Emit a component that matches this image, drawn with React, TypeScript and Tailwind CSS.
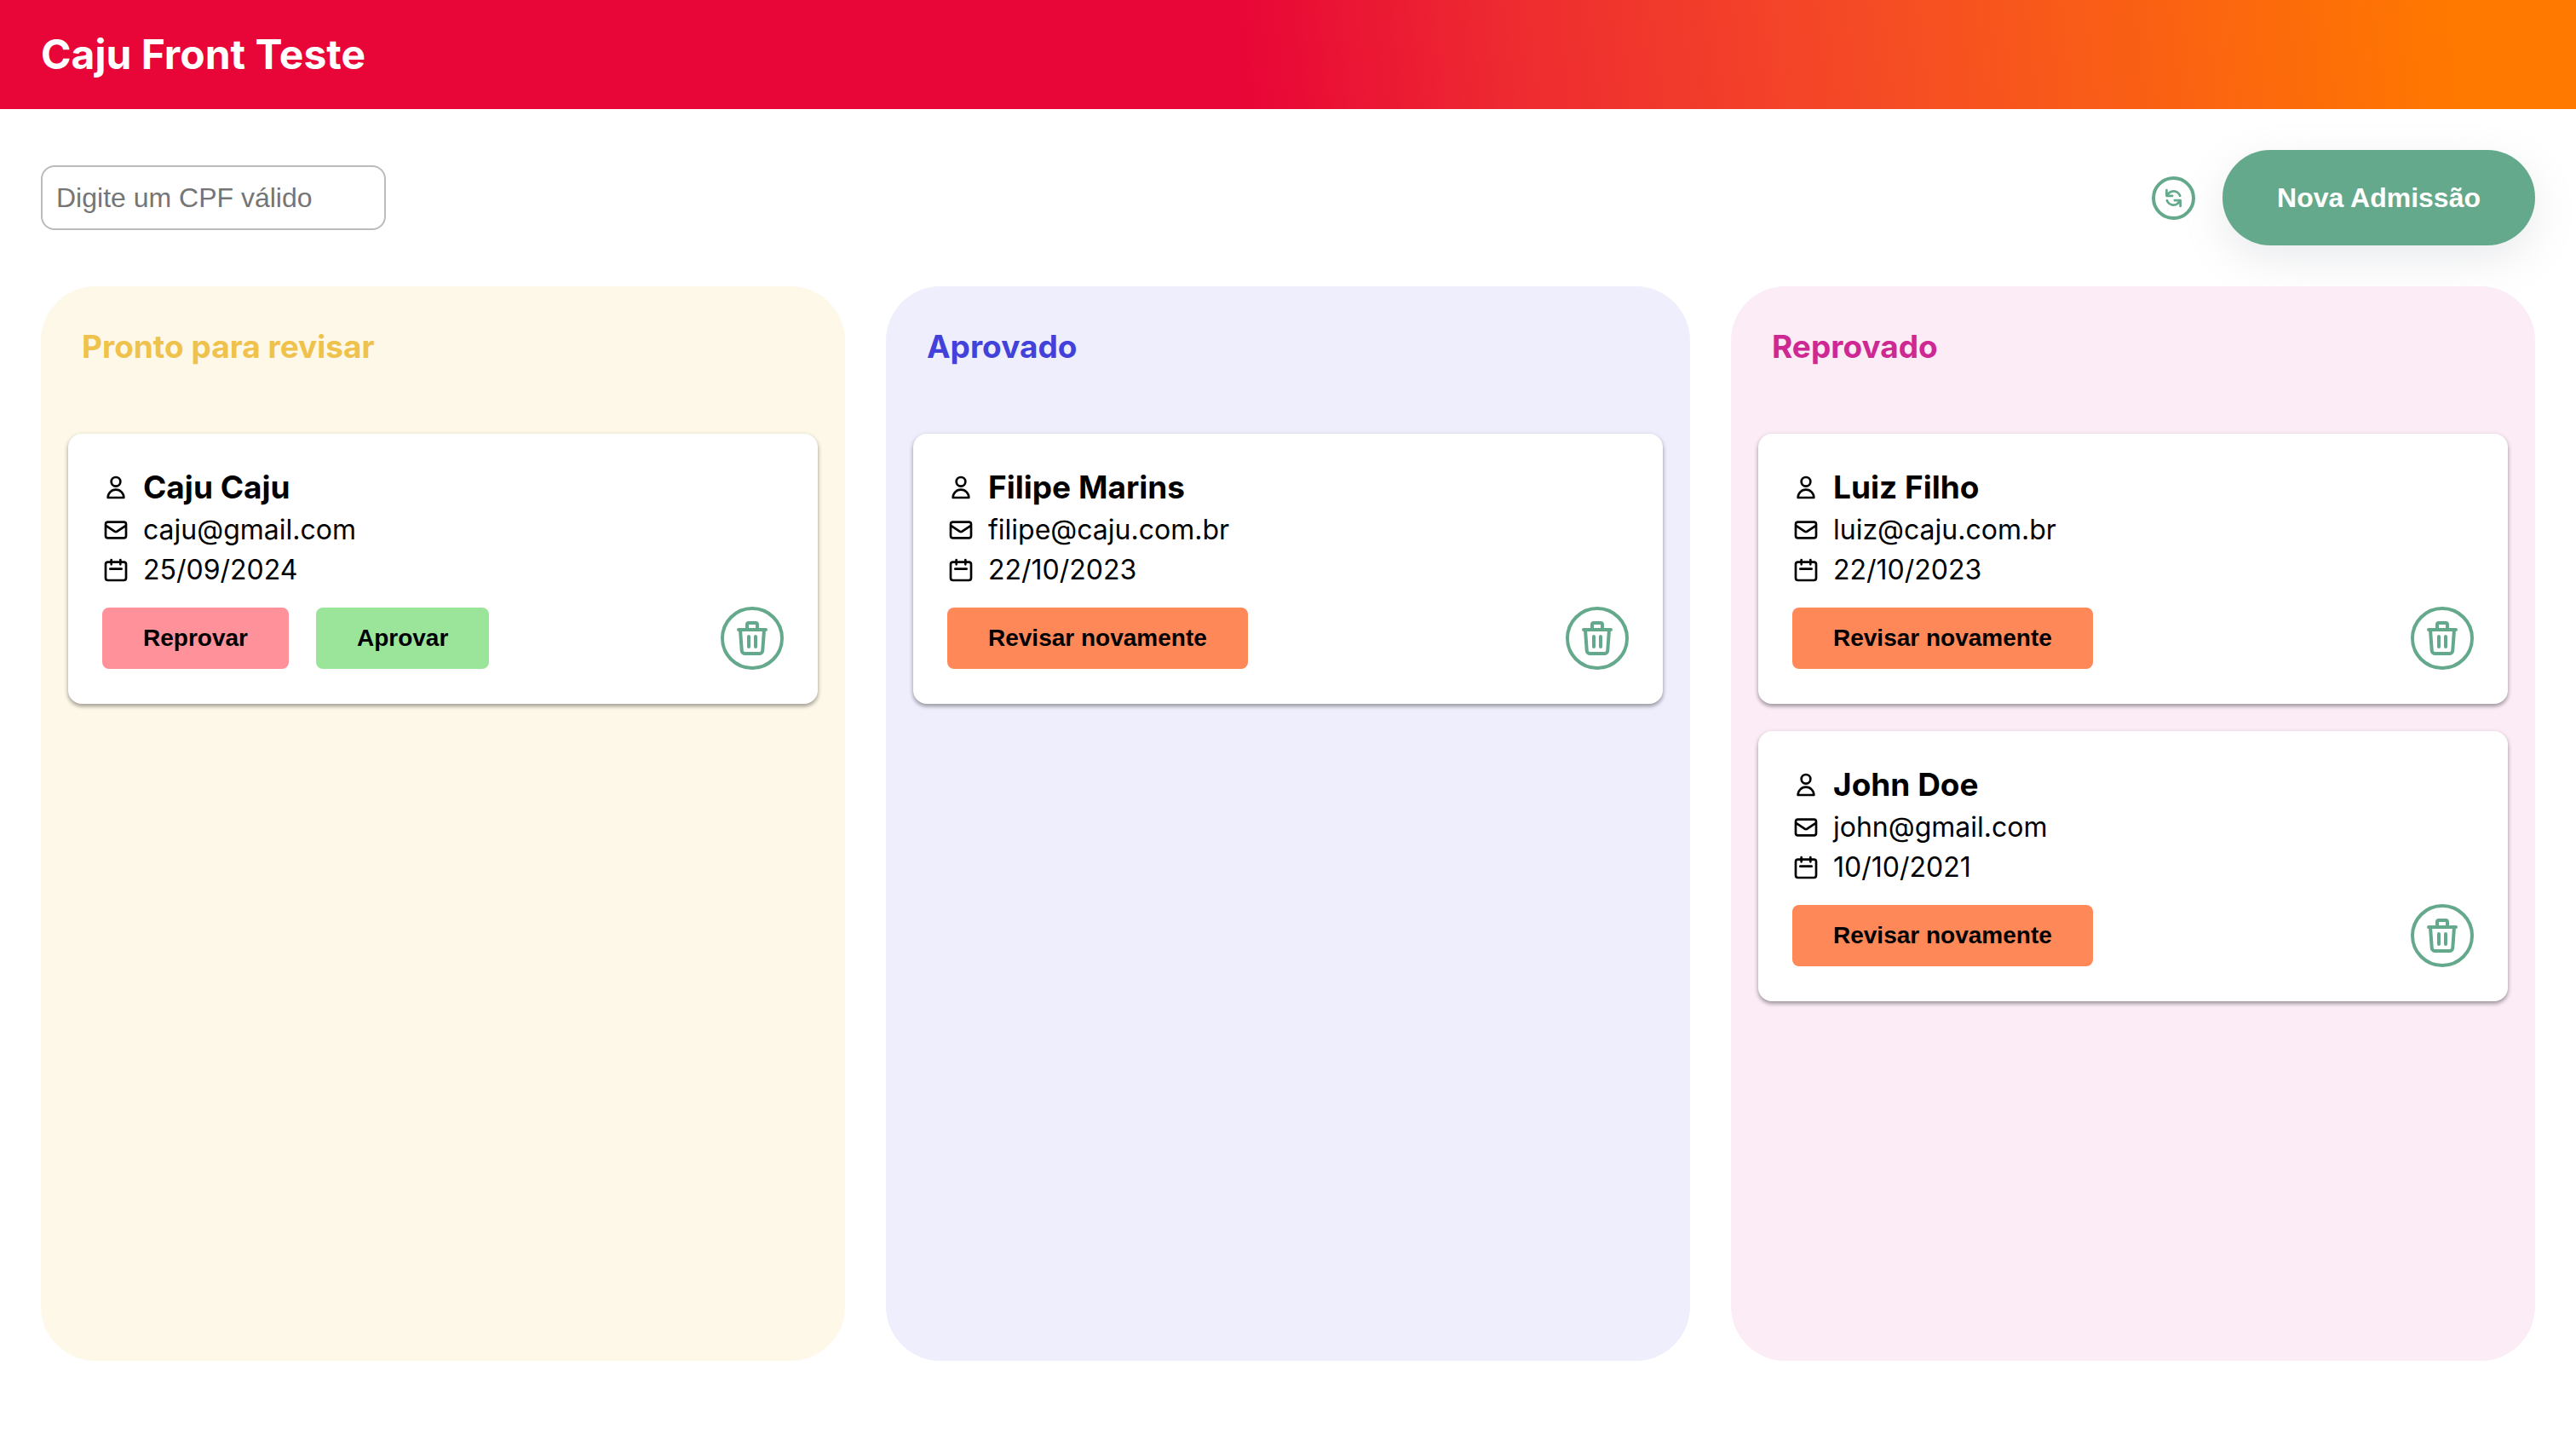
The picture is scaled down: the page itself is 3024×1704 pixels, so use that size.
import { HiOutlineCalendar, HiOutlineMail, HiOutlineTrash, HiOutlineUser, HiRefresh } from "react-icons/hi";

type Action = "Reprovar" | "Aprovar" | "Revisar novamente";

type Registration = {
  name: string;
  email: string;
  date: string;
  actions: Action[];
};

type ColumnData = {
  title: string;
  surface: string;
  heading: string;
  registrations: Registration[];
};

const actionColors: Record<Action, string> = {
  Reprovar: "bg-[#ff919a]",
  Aprovar: "bg-[#9be59b]",
  "Revisar novamente": "bg-[#ff8858]",
};

const columns: ColumnData[] = [
  {
    title: "Pronto para revisar",
    surface: "bg-[#fef8e8]",
    heading: "text-[#efc24d]",
    registrations: [
      { name: "Caju Caju", email: "caju@gmail.com", date: "25/09/2024", actions: ["Reprovar", "Aprovar"] },
    ],
  },
  {
    title: "Aprovado",
    surface: "bg-[#eeeefd]",
    heading: "text-[#4242db]",
    registrations: [
      { name: "Filipe Marins", email: "filipe@caju.com.br", date: "22/10/2023", actions: ["Revisar novamente"] },
    ],
  },
  {
    title: "Reprovado",
    surface: "bg-[#fbecf6]",
    heading: "text-[#ce2893]",
    registrations: [
      { name: "Luiz Filho", email: "luiz@caju.com.br", date: "22/10/2023", actions: ["Revisar novamente"] },
      { name: "John Doe", email: "john@gmail.com", date: "10/10/2021", actions: ["Revisar novamente"] },
    ],
  },
];

function RegistrationCard({ registration }: { registration: Registration }) {
  return (
    <article className="rounded-2xl bg-white p-10 text-black shadow-[0_2px_6px_rgba(0,0,0,0.16),0_3px_4px_rgba(0,0,0,0.26)]">
      <div className="flex flex-col gap-2">
        <div className="flex items-center gap-4">
          <HiOutlineUser className="size-8 shrink-0" />
          <h3 className="text-[37px] leading-[45px] font-bold">{registration.name}</h3>
        </div>
        <div className="flex items-center gap-4">
          <HiOutlineMail className="size-8 shrink-0" />
          <p className="text-[32px] leading-[39px]">{registration.email}</p>
        </div>
        <div className="flex items-center gap-4">
          <HiOutlineCalendar className="size-8 shrink-0" />
          <p className="text-[32px] leading-[39px]">{registration.date}</p>
        </div>
      </div>
      <div className="mt-6 flex items-center gap-8">
        {registration.actions.map((action) => (
          <button
            key={action}
            type="button"
            className={`h-18 cursor-pointer rounded-lg px-12 font-['Liberation_Sans',sans-serif] text-[28px] font-bold ${actionColors[action]}`}
          >
            {action}
          </button>
        ))}
        <button
          type="button"
          aria-label={`Excluir ${registration.name}`}
          className="ml-auto flex size-[74px] cursor-pointer items-center justify-center rounded-full border-4 border-[#64a98c] text-[#64a98c]"
        >
          <HiOutlineTrash className="size-12" />
        </button>
      </div>
    </article>
  );
}

function Column({ column }: { column: ColumnData }) {
  return (
    <section className={`min-h-[1261px] rounded-[64px] px-8 pt-12 pb-8 ${column.surface}`}>
      <h2 className={`px-4 text-[37px] leading-[45px] font-bold ${column.heading}`}>{column.title}</h2>
      <div className="mt-20 flex flex-col gap-8">
        {column.registrations.map((registration) => (
          <RegistrationCard key={registration.name} registration={registration} />
        ))}
      </div>
    </section>
  );
}

export default function App() {
  return (
    <div className="min-h-screen bg-white font-['Inter',sans-serif]">
      <header className="flex h-32 items-center bg-[linear-gradient(83deg,#e80537_48%,#ee2c30_59%,#f54a26_72%,#ff7800_95%)] px-12">
        <h1 className="text-5xl font-bold text-white">Caju Front Teste</h1>
      </header>
      <main className="p-12">
        <div className="flex items-center justify-between">
          <input
            type="text"
            aria-label="CPF"
            placeholder="Digite um CPF válido"
            className="h-19 w-[405px] rounded-2xl border-2 border-[#bbbbbb] px-4 font-['Liberation_Sans',sans-serif] text-[32px] placeholder:text-[#757575]"
          />
          <div className="flex items-center gap-8">
            <button
              type="button"
              aria-label="Atualizar"
              className="flex size-[51px] cursor-pointer items-center justify-center rounded-full border-4 border-[#64a98c] text-[#64a98c]"
            >
              <HiRefresh className="size-[27px]" />
            </button>
            <button
              type="button"
              className="h-28 cursor-pointer rounded-full bg-[#64a98c] px-16 font-['Liberation_Sans',sans-serif] text-[32px] font-bold text-white shadow-[0_16px_48px_rgba(149,157,165,0.2)]"
            >
              Nova Admissão
            </button>
          </div>
        </div>
        <div className="mt-12 grid grid-cols-3 gap-12">
          {columns.map((column) => (
            <Column key={column.title} column={column} />
          ))}
        </div>
      </main>
    </div>
  );
}
